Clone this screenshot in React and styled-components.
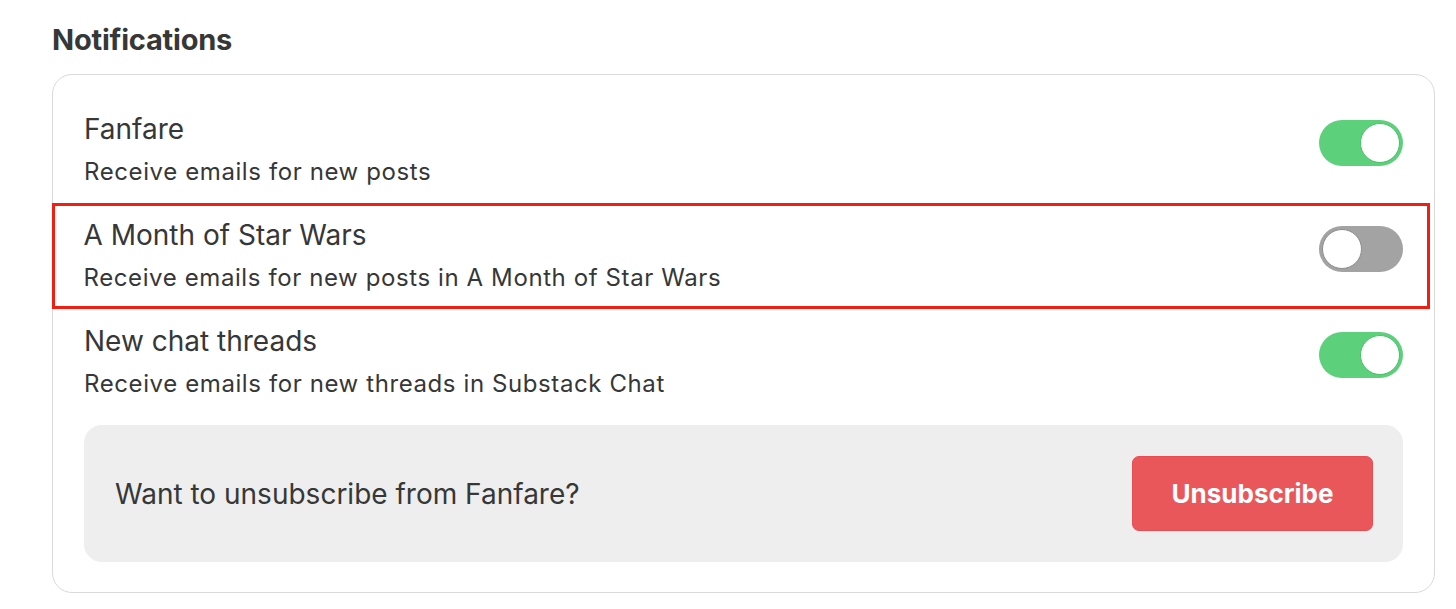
import React, { useState } from 'react';
import styled, { createGlobalStyle } from 'styled-components';

const GlobalStyle = createGlobalStyle`
  body {
    margin: 0;
    background: #ffffff;
    font-family: Inter, "Noto Sans", "Liberation Sans", sans-serif;
    color: #363737;
  }
`;

const Page = styled.div`
  padding: 22px 21px 16px 52px;
`;

const Heading = styled.h2`
  margin: 0 0 17px 0;
  font-size: 29px;
  line-height: 35px;
  font-weight: 700;
  color: #363737;
  letter-spacing: -0.2px;
`;

const Card = styled.div`
  border: 1.5px solid #d9d9d9;
  border-radius: 20px;
  padding: 22px 0 30px 0;
`;

const Row = styled.div`
  display: flex;
  align-items: flex-start;
  justify-content: space-between;
  height: 106px;
  box-sizing: border-box;
  padding: ${p => (p.highlighted ? '0 27px 0 32px' : '0 31px 0 31px')};
  margin-right: ${p => (p.highlighted ? '4px' : '0')};
  margin-left: ${p => (p.highlighted ? '-1.5px' : '0')};
  outline: ${p => (p.highlighted ? '3px solid #f41d12' : 'none')};
  outline-offset: -3px;
`;

const RowText = styled.div`
  display: flex;
  flex-direction: column;
  padding-top: 15px;
`;

const Title = styled.div`
  font-size: 28px;
  line-height: 34px;
  color: #363737;
`;

const Subtitle = styled.div`
  margin-top: 11px;
  font-size: 24px;
  line-height: 30px;
  letter-spacing: 0.6px;
  color: #363737;
`;

const Track = styled.button`
  position: relative;
  width: 84px;
  height: 46px;
  border-radius: 23px;
  border: none;
  padding: 0;
  cursor: pointer;
  background: ${p => (p.on ? '#5dd07b' : '#a3a3a3')};
  flex-shrink: 0;
  margin-top: 23px;
`;

const Knob = styled.span`
  position: absolute;
  top: 3px;
  left: ${p => (p.on ? '41px' : '3px')};
  width: 40px;
  height: 40px;
  border-radius: 50%;
  background: #ffffff;
  box-sizing: border-box;
  border: 1px solid ${p => (p.on ? '#4cbf6b' : '#8d8d8d')};
  transition: left 0.15s;
`;

const Unsub = styled.div`
  display: flex;
  align-items: center;
  justify-content: space-between;
  margin: 10px 31px 0 31px;
  height: 137px;
  box-sizing: border-box;
  padding: 0 30px 0 31px;
  background: #eeeeee;
  border-radius: 18px;
`;

const UnsubText = styled.div`
  font-size: 28px;
  color: #363737;
`;

const DangerButton = styled.button`
  width: 241px;
  height: 75px;
  border: 1px solid #e84d52;
  border-radius: 7px;
  background: #ea575b;
  color: #ffffff;
  font-family: Inter, "Noto Sans", "Liberation Sans", sans-serif;
  font-size: 26px;
  font-weight: 700;
  cursor: pointer;
`;

const Toggle = ({ on, onClick }) => (
  <Track on={on} onClick={onClick}>
    <Knob on={on} />
  </Track>
);

const App = () => {
  const [settings, setSettings] = useState([
    { title: 'Fanfare', sub: 'Receive emails for new posts', on: true },
    { title: 'A Month of Star Wars', sub: 'Receive emails for new posts in A Month of Star Wars', on: false, highlighted: true },
    { title: 'New chat threads', sub: 'Receive emails for new threads in Substack Chat', on: true },
  ]);

  const flip = (i) => {
    setSettings(settings.map((s, j) => (j === i ? { ...s, on: !s.on } : s)));
  };

  return (
    <Page>
      <GlobalStyle />
      <Heading>Notifications</Heading>
      <Card>
        {settings.map((s, i) => (
          <Row key={s.title} highlighted={s.highlighted}>
            <RowText>
              <Title>{s.title}</Title>
              <Subtitle>{s.sub}</Subtitle>
            </RowText>
            <Toggle on={s.on} onClick={() => flip(i)} />
          </Row>
        ))}
        <Unsub>
          <UnsubText>Want to unsubscribe from Fanfare?</UnsubText>
          <DangerButton>Unsubscribe</DangerButton>
        </Unsub>
      </Card>
    </Page>
  );
};

export default App;
